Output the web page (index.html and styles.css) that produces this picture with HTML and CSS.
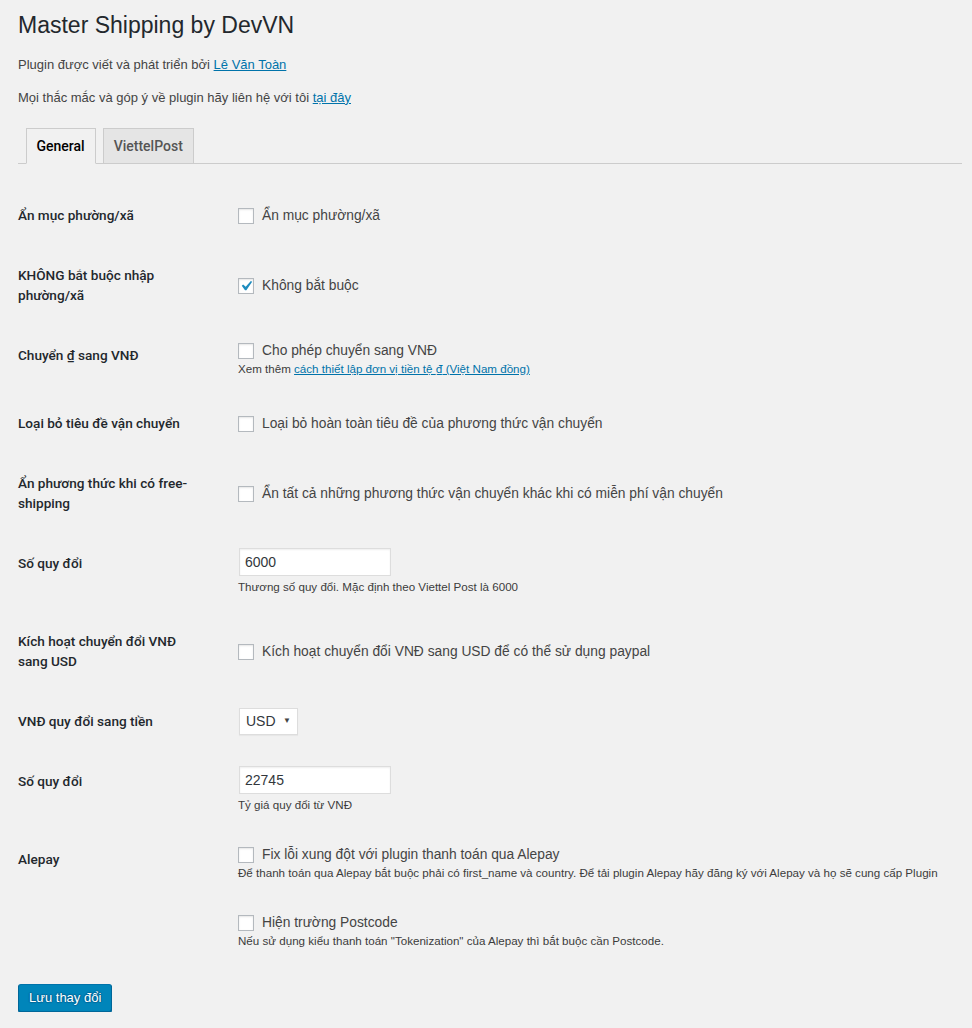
FILE: index.html
```html
<!DOCTYPE html>
<html lang="vi">
<head>
<meta charset="utf-8">
<title>Master Shipping by DevVN</title>
<link rel="stylesheet" href="styles.css">
</head>
<body>
<div class="wrap">
  <h1 class="page-title">Master Shipping by DevVN</h1>
  <p class="intro">Plugin được viết và phát triển bởi <a href="#">Lê Văn Toàn</a></p>
  <p class="intro">Mọi thắc mắc và góp ý về plugin hãy liên hệ với tôi <a href="#">tại đây</a></p>

  <nav class="nav-tabs">
    <a class="nav-tab active" href="#">General</a>
    <a class="nav-tab" href="#">ViettelPost</a>
  </nav>

  <table class="form-table">
    <tr>
      <th>Ẩn mục phường/xã</th>
      <td><label class="check"><span class="box"></span>Ẩn mục phường/xã</label></td>
    </tr>
    <tr>
      <th>KHÔNG bắt buộc nhập phường/xã</th>
      <td><label class="check"><span class="box"><svg class="tick" viewBox="2 2 16 16" width="16" height="16"><path d="M14.83 4.89l1.34.94-5.81 8.38H9.02L5.78 9.67l1.34-1.25 2.57 2.4z" fill="#1e8cbe"/></svg></span>Không bắt buộc</label></td>
    </tr>
    <tr>
      <th>Chuyển ₫ sang VNĐ</th>
      <td>
        <label class="check"><span class="box"></span>Cho phép chuyển sang VNĐ</label>
        <p class="description">Xem thêm <a href="#">cách thiết lập đơn vị tiền tệ <span class="dong">₫</span> (Việt Nam đồng)</a></p>
      </td>
    </tr>
    <tr>
      <th>Loại bỏ tiêu đề vận chuyển</th>
      <td><label class="check"><span class="box"></span>Loại bỏ hoàn toàn tiêu đề của phương thức vận chuyển</label></td>
    </tr>
    <tr>
      <th>Ẩn phương thức khi có free-shipping</th>
      <td><label class="check"><span class="box"></span>Ẩn tất cả những phương thức vận chuyển khác khi có miễn phí vận chuyển</label></td>
    </tr>
    <tr>
      <th>Số quy đổi</th>
      <td>
        <input class="text-input" type="text" value="6000">
        <p class="description">Thương số quy đổi. Mặc định theo Viettel Post là 6000</p>
      </td>
    </tr>
    <tr>
      <th>Kích hoạt chuyển đổi VNĐ sang USD</th>
      <td><label class="check"><span class="box"></span>Kích hoạt chuyển đổi VNĐ sang USD để có thể sử dụng paypal</label></td>
    </tr>
    <tr>
      <th>VNĐ quy đổi sang tiền</th>
      <td>
        <span class="select"><span class="select-value">USD</span><span class="select-arrow">▼</span></span>
      </td>
    </tr>
    <tr>
      <th>Số quy đổi</th>
      <td>
        <input class="text-input" type="text" value="22745">
        <p class="description">Tỷ giá quy đổi từ VNĐ</p>
      </td>
    </tr>
    <tr>
      <th>Alepay</th>
      <td>
        <label class="check"><span class="box"></span>Fix lỗi xung đột với plugin thanh toán qua Alepay</label>
        <p class="description">Để thanh toán qua Alepay bắt buộc phải có first_name và country. Để tải plugin Alepay hãy đăng ký với Alepay và họ sẽ cung cấp Plugin</p>
        <label class="check spaced"><span class="box"></span>Hiện trường Postcode</label>
        <p class="description">Nếu sử dụng kiểu thanh toán "Tokenization" của Alepay thì bắt buộc cần Postcode.</p>
      </td>
    </tr>
  </table>

  <p class="submit"><button class="button-primary" type="button">Lưu thay đổi</button></p>
</div>
</body>
</html>
```

FILE: styles.css
```css
html, body {
  margin: 0;
  padding: 0;
  background: #f1f1f1;
}

body {
  font-family: "Liberation Sans", Arial, sans-serif;
  font-size: 13px;
  color: #444;
}

.wrap {
  padding: 0 10px 0 18px;
}

.page-title {
  margin: 0;
  padding: 11px 0 2px;
  font-size: 23px;
  font-weight: 400;
  line-height: 29px;
  color: #23282d;
}

.intro {
  margin: 13px 0;
  line-height: 19.5px;
}

a {
  color: #0073aa;
  text-decoration: underline;
}

.nav-tabs {
  display: flex;
  align-items: flex-end;
  padding-top: 8px;
  border-bottom: 1px solid #ccc;
}

.nav-tab {
  display: block;
  margin-left: 7px;
  margin-bottom: -1px;
  padding: 5px 10px;
  border: 1px solid #ccc;
  background: #e5e5e5;
  color: #555;
  font-family: Roboto, "Liberation Sans", sans-serif;
  font-weight: 500;
  font-size: 14px;
  line-height: 24px;
  text-decoration: none;
}

.nav-tab:first-child {
  margin-left: 7.5px;
}

.nav-tab.active {
  background: #f1f1f1;
  border-bottom-color: #f1f1f1;
  color: #000;
}

.form-table {
  margin-top: 21px;
  border-collapse: collapse;
  border-spacing: 0;
  table-layout: fixed;
  width: 100%;
}

.form-table th {
  width: 185px;
  padding: 20px 25px 20px 0;
  text-align: left;
  vertical-align: top;
  font-family: Roboto, "Liberation Sans", sans-serif;
  font-weight: 500;
  font-size: 13.6px;
  line-height: 20px;
  color: #23282d;
}

.form-table td {
  padding: 15px 10px;
  vertical-align: middle;
  font-size: 13.8px;
  line-height: 20px;
  color: #444;
}

.check {
  display: flex;
  align-items: center;
  gap: 8px;
  box-sizing: border-box;
  height: 20px;
  padding-top: 1px;
}

.check.spaced {
  margin-top: 30px;
}

.box {
  position: relative;
  flex: none;
  width: 16px;
  height: 16px;
  box-sizing: border-box;
  border: 1px solid #b4b9be;
  background: #fff;
  box-shadow: inset 0 1px 2px rgba(0, 0, 0, 0.1);
}

.tick {
  position: absolute;
  left: -1px;
  top: -1px;
  display: block;
}

.description {
  margin: 0;
  font-size: 11.6px;
  line-height: 18px;
  color: #3c3c3c;
  white-space: nowrap;
}

.dong {
  font-family: Roboto, "Liberation Sans", sans-serif;
}

.text-input {
  display: block;
  box-sizing: border-box;
  width: 152px;
  height: 28px;
  margin: 0 1px 2px;
  padding: 3px 5px;
  border: 1px solid #ddd;
  background: #fff;
  box-shadow: inset 0 1px 2px rgba(0, 0, 0, 0.07);
  font-family: "Liberation Sans", Arial, sans-serif;
  font-size: 14px;
  color: #32373c;
  outline: none;
}

.select {
  display: inline-flex;
  align-items: center;
  justify-content: space-between;
  box-sizing: border-box;
  width: 59px;
  height: 27px;
  margin-left: 1px;
  padding: 0 6px;
  border: 1px solid #ddd;
  background: #fff;
  box-shadow: 0 1px 1px rgba(0, 0, 0, 0.04);
  font-size: 14px;
  color: #32373c;
  vertical-align: middle;
}

.select-arrow {
  font-size: 8px;
  color: #444;
  line-height: 1;
}

.submit {
  margin: 19px 0 0;
  padding: 0;
}

.button-primary {
  display: inline-block;
  height: 28px;
  margin: 0;
  padding: 0 10px 1px;
  border: 1px solid;
  border-color: #0073aa #006799 #006799;
  border-radius: 3px;
  background: #0085ba;
  box-shadow: 0 1px 0 #006799;
  color: #fff;
  font-family: "Liberation Sans", Arial, sans-serif;
  font-size: 13px;
  line-height: 26px;
  text-shadow: 0 -1px 1px #006799, 1px 0 1px #006799, 0 1px 1px #006799, -1px 0 1px #006799;
  cursor: pointer;
}
```
